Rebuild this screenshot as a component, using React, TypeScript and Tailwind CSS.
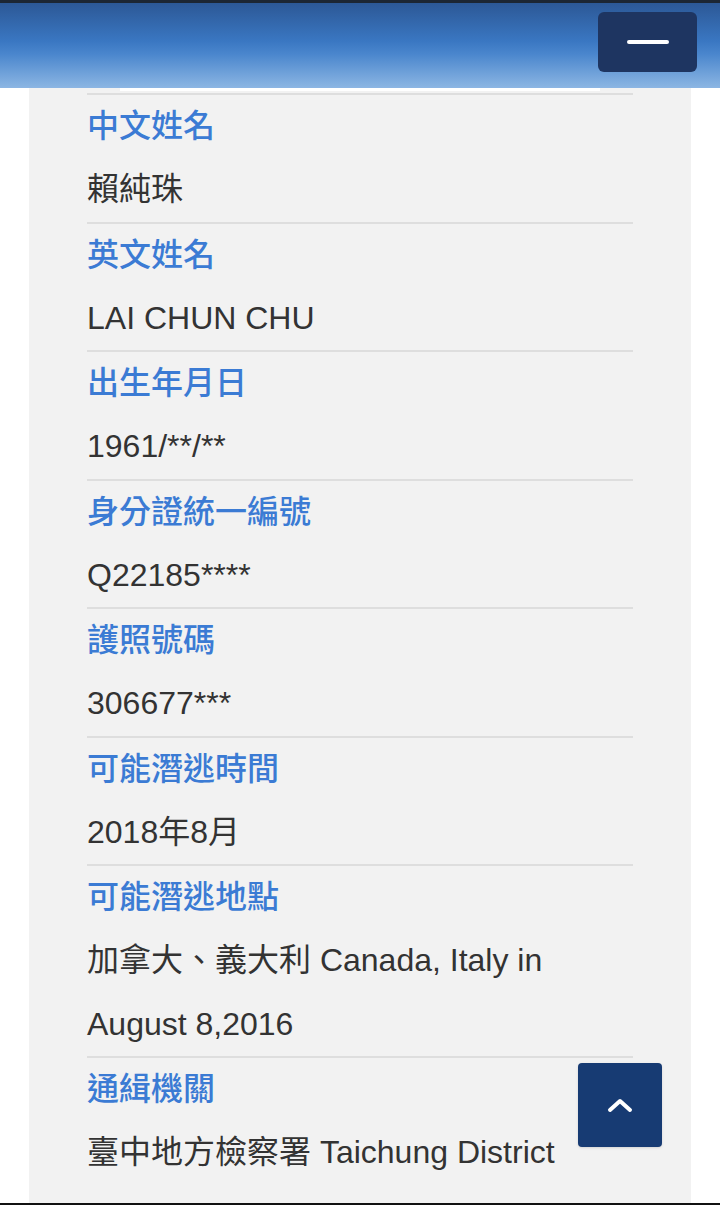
const rows = [
  { label: "中文姓名", value: "賴純珠" },
  { label: "英文姓名", value: "LAI CHUN CHU" },
  { label: "出生年月日", value: "1961/**/**" },
  { label: "身分證統一編號", value: "Q22185****" },
  { label: "護照號碼", value: "306677***" },
  { label: "可能潛逃時間", value: "2018年8月" },
  { label: "可能潛逃地點", value: "加拿大、義大利 Canada, Italy in August 8,2016" },
  { label: "通緝機關", value: "臺中地方檢察署 Taichung District Prosecutors Office" },
]

const App = () => {
  return (
    <div
      className="relative h-[1205px] overflow-hidden border-b-2 border-[#111] bg-white"
      style={{ fontFamily: '"Liberation Sans", "Noto Sans CJK TC", sans-serif' }}
    >
      <header className="flex h-[88px] items-start justify-end border-t-[3px] border-[#1c2633] bg-[linear-gradient(to_bottom,#2c5896_0%,#3a77c2_45%,#4a86cd_60%,#8cb6e3_100%)] pr-[23px] pt-[9px]">
        <button className="flex h-[60px] w-[99px] items-center justify-center rounded-md bg-[#1e3561]">
          <span className="block h-[4px] w-[42px] rounded-full bg-white" />
        </button>
      </header>

      <main className="mx-[29px] bg-[#f2f2f2] px-[58px]">
        <div className="relative h-[5px]">
          <div className="absolute left-[33px] right-[33px] top-0 h-[3px] bg-white" />
        </div>
        {rows.map((row) => (
          <section key={row.label} className="border-t-2 border-[#dedede]">
            <h3 className="text-[32px] font-medium leading-[63px] text-[#3b7bd4]">
              {row.label}
            </h3>
            <p className="text-[32px] leading-[63.5px] text-[#333]">{row.value}</p>
          </section>
        ))}
      </main>

      <button className="absolute bottom-[56px] right-[58px] flex h-[84px] w-[84px] items-center justify-center rounded-[4px] bg-[#173b73] shadow-sm">
        <svg width="26" height="16" viewBox="0 0 26 16" fill="none">
          <path
            d="M3 13 L13 4 L23 13"
            stroke="white"
            strokeWidth="4"
            strokeLinecap="round"
            strokeLinejoin="round"
          />
        </svg>
      </button>
    </div>
  )
}

export default App
